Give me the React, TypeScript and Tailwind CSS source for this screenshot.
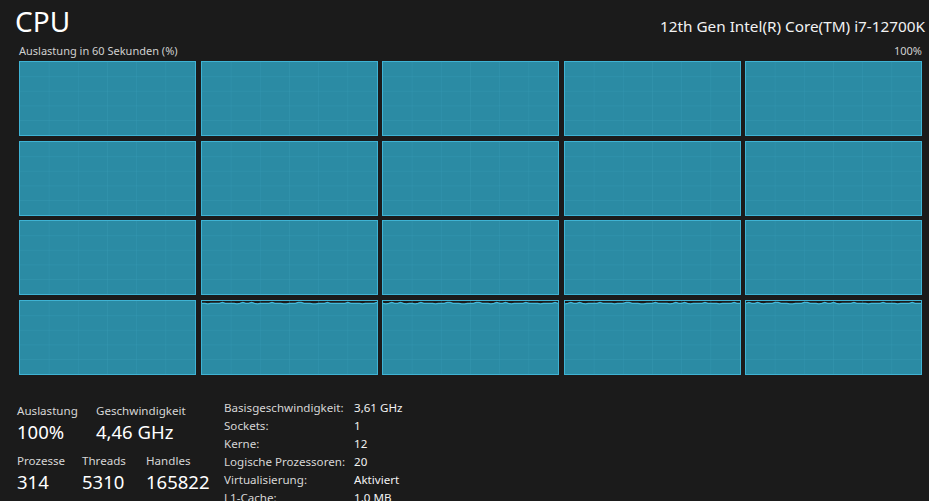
import * as React from 'react';

const FONT = { fontFamily: '"Segoe UI", "Noto Sans", "Open Sans", sans-serif' };

// y-values (0 = top) for the partially loaded cores, sampled across 60 points
const bumpy = (seed: number) =>
  Array.from({ length: 61 }, (_, i) => {
    const v = Math.sin(i * 0.7 + seed) * 0.6 + Math.sin(i * 1.9 + seed * 2) * 0.5;
    return 3.2 + (v > 0.55 ? -1.4 : v < -0.7 ? 0.8 : 0);
  });

const Tile: React.FC<{ line?: number[] }> = ({ line }) => {
  const w = 100;
  const h = 100;
  const pts = line
    ? line.map((y, i) => `${(i / (line.length - 1)) * w},${y}`).join(' ')
    : `0,0 ${w},0`;
  return (
    <div className="relative h-full w-full border border-[#3fb3d4] bg-[#1b1b1b]">
      <svg viewBox="0 0 100 100" preserveAspectRatio="none" className="absolute inset-0 h-full w-full">
        <polygon points={`0,${h} ${pts} ${w},${h}`} fill="#2b8ba4" />
        {[1, 2, 3, 4, 5].map((i) => (
          <line
            key={`v${i}`}
            x1={(i * w) / 6}
            x2={(i * w) / 6}
            y1={0}
            y2={h}
            stroke="#3aa0ba"
            strokeOpacity={0.3}
            strokeWidth={1}
            vectorEffect="non-scaling-stroke"
          />
        ))}
        {[1, 2, 3, 4].map((i) => (
          <line
            key={`h${i}`}
            x1={0}
            x2={w}
            y1={(i * h) / 5}
            y2={(i * h) / 5}
            stroke="#3aa0ba"
            strokeOpacity={0.3}
            strokeWidth={1}
            vectorEffect="non-scaling-stroke"
          />
        ))}
        {line && (
          <polyline
            points={pts}
            fill="none"
            stroke="#45b8d8"
            strokeWidth={1.2}
            vectorEffect="non-scaling-stroke"
          />
        )}
      </svg>
    </div>
  );
};

const details: [string, string][] = [
  ['Basisgeschwindigkeit:', '3,61 GHz'],
  ['Sockets:', '1'],
  ['Kerne:', '12'],
  ['Logische Prozessoren:', '20'],
  ['Virtualisierung:', 'Aktiviert'],
  ['L1-Cache:', '1,0 MB'],
];

export default function App() {
  const tiles = Array.from({ length: 20 }, (_, i) => (i >= 16 ? bumpy(i) : undefined));

  return (
    <div className="h-[501px] w-[929px] overflow-hidden bg-[#1b1b1b] text-white" style={FONT}>
      {/* Header */}
      <div className="flex items-baseline justify-between pl-[15px] pr-[4px] pt-[3px]">
        <h1 className="text-[28px] leading-[36px] font-normal">CPU</h1>
        <p className="text-[15.3px] leading-[20px] text-[#f2f2f2]">12th Gen Intel(R) Core(TM) i7-12700K</p>
      </div>

      {/* Graph label */}
      <div className="mt-[5px] flex justify-between pl-[19px] pr-[7px] text-[11px] leading-[14px] text-[#d0d0d0]">
        <span>Auslastung in 60 Sekunden (%)</span>
        <span>100%</span>
      </div>

      {/* Per-core graphs */}
      <div className="ml-[19px] mt-[3px] grid h-[314px] w-[903px] grid-cols-5 grid-rows-4 gap-x-[4.5px] gap-y-[4.5px]">
        {tiles.map((line, i) => (
          <Tile key={i} line={line} />
        ))}
      </div>

      {/* Stats */}
      <div className="mt-[28px] flex pl-[17px]">
        <div className="w-[207px]">
          <div className="flex">
            <div className="w-[79px]">
              <p className="text-[11.6px] leading-[16px] text-[#d6d6d6]">Auslastung</p>
              <p className="text-[18.5px] leading-[26px]">100%</p>
            </div>
            <div>
              <p className="text-[11.6px] leading-[16px] text-[#d6d6d6]">Geschwindigkeit</p>
              <p className="text-[18.5px] leading-[26px]">4,46 GHz</p>
            </div>
          </div>
          <div className="mt-[8px] flex">
            <div className="w-[65px]">
              <p className="text-[11.6px] leading-[16px] text-[#d6d6d6]">Prozesse</p>
              <p className="text-[18.5px] leading-[26px]">314</p>
            </div>
            <div className="w-[64px]">
              <p className="text-[11.6px] leading-[16px] text-[#d6d6d6]">Threads</p>
              <p className="text-[18.5px] leading-[26px]">5310</p>
            </div>
            <div>
              <p className="text-[11.6px] leading-[16px] text-[#d6d6d6]">Handles</p>
              <p className="text-[18.5px] leading-[26px]">165822</p>
            </div>
          </div>
        </div>
        <div className="-mt-[4px] grid grid-cols-[130px_auto] text-[11.6px] leading-[18px]">
          {details.map(([k, v]) => (
            <React.Fragment key={k}>
              <span className="text-[#d6d6d6]">{k}</span>
              <span className="text-[#f2f2f2]">{v}</span>
            </React.Fragment>
          ))}
        </div>
      </div>
    </div>
  );
}
